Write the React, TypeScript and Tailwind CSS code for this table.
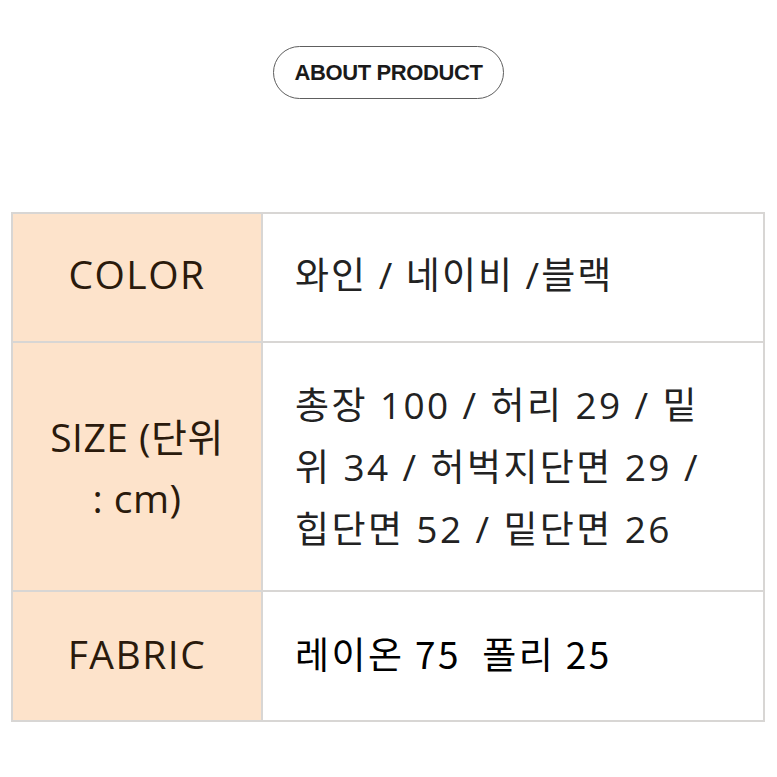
export default function App() {
  const labelFont = {
    fontFamily: '"Open Sans", "Noto Sans CJK KR", sans-serif',
  };
  return (
    <div className="min-h-[777px] w-[777px] bg-white" style={labelFont}>
      <div className="flex justify-center pt-[46px]">
        <div className="flex h-[53px] w-[231px] items-center justify-center rounded-full border-[1.5px] border-[#5e5e5e]">
          <span className="font-['Liberation_Sans',Arial,sans-serif] text-[22px] font-bold tracking-[-0.4px] text-[#1a1a1a]">
            ABOUT PRODUCT
          </span>
        </div>
      </div>

      <div className="mt-[113px] px-[11px]">
        <table className="w-[754px] border-collapse border-2 border-[#d8d6d4]">
          <tbody>
            <tr className="h-[129px]">
              <td className="w-[250px] border-2 border-[#d8d6d4] bg-[#fde3cb] pb-[6px] text-center text-[39px] tracking-[1.5px] text-[#2a1a0c]">
                COLOR
              </td>
              <td className="border-2 border-[#d8d6d4] pb-[6px] pl-[32px] text-[37px] tracking-[2px] text-[#222]">
                와인 / 네이비 /블랙
              </td>
            </tr>
            <tr className="h-[249px]">
              <td className="border-2 border-[#d8d6d4] bg-[#fde3cb] text-center text-[39px] leading-[61px] tracking-[0.5px] text-[#2a1a0c]">
                SIZE (단위
                <br />: cm)
              </td>
              <td className="whitespace-nowrap border-2 border-[#d8d6d4] pl-[32px] text-[37px] leading-[62px] tracking-[2.4px] text-[#222]">
                총장 100 / 허리 29 / 밑
                <br />
                위 34 / 허벅지단면 29 /
                <br />
                힙단면 52 / 밑단면 26
              </td>
            </tr>
            <tr className="h-[130px]">
              <td className="border-2 border-[#d8d6d4] bg-[#fde3cb] pb-[4px] text-center text-[39px] tracking-[1.5px] text-[#2a1a0c]">
                FABRIC
              </td>
              <td className="whitespace-pre border-2 border-[#d8d6d4] pb-[4px] pl-[32px] font-['Noto_Sans_CJK_KR',sans-serif] text-[37px] tracking-[2.4px] text-black">
                {"레이온 75  폴리 25"}
              </td>
            </tr>
          </tbody>
        </table>
      </div>
    </div>
  );
}
